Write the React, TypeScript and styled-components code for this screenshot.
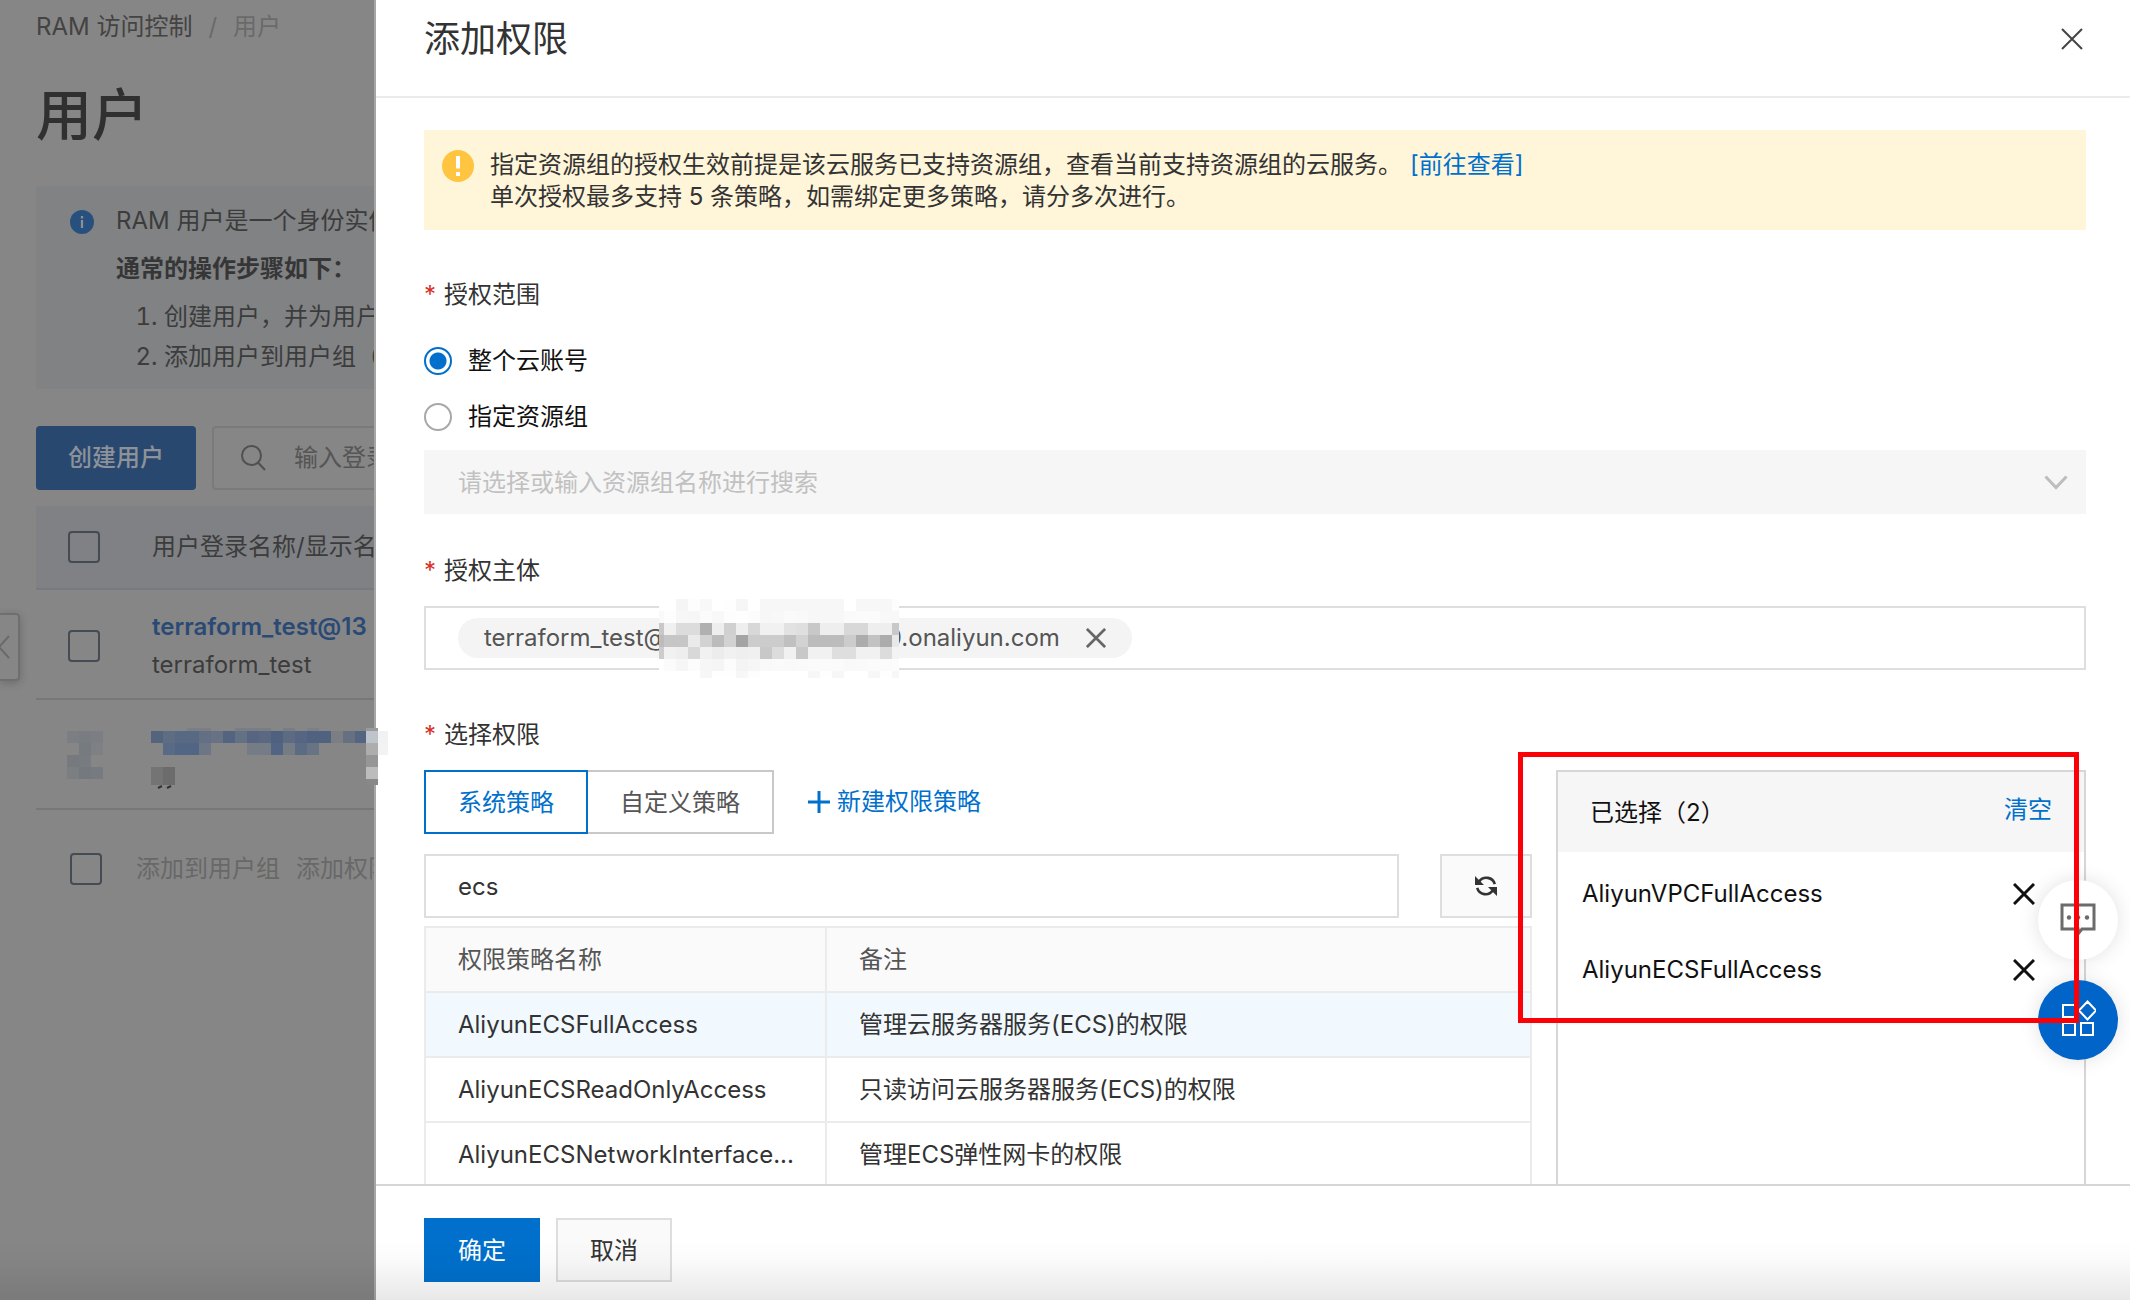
import React, { useState } from "react";
import styled, { createGlobalStyle, css } from "styled-components";

const GlobalStyle = createGlobalStyle`
  *, *::before, *::after { box-sizing: border-box; }
  body {
    margin: 0;
    color: #333;
    background: #868686;
    font-family: Inter, "Noto Sans CJK SC", sans-serif;
    font-size: 24px;
    line-height: 32px;
  }
  button, input, select { font: inherit; color: inherit; margin: 0; }
  button { cursor: pointer; }
  a { color: #0070cc; text-decoration: none; }
  svg { display: block; }
`;

/* ---------- page behind the drawer ---------- */

const Shell = styled.div`
  position: relative;
  display: flex;
  height: 100vh;
  overflow: hidden;
`;

const Backdrop = styled.aside`
  flex: 0 0 374px;
  width: 374px;
  padding: 11px 0 0 36px;
  background: #868686;
  color: #3c3c3c;
  white-space: nowrap;
`;

const Breadcrumb = styled.nav`
  display: flex;
  gap: 16px;
  color: #6a6a6a;
`;

const CrumbLink = styled.a`
  color: #434343;
`;

const PageTitle = styled.h1`
  margin: 36px 0 35px;
  font-size: 56px;
  line-height: 72px;
  font-weight: 500;
  color: #303030;
`;

const InfoBox = styled.section`
  display: flex;
  gap: 22px;
  height: 203px;
  padding: 19px 0 0 34px;
  background: #808284;
  border-radius: 3px 0 0 3px;

  > svg { flex: none; margin-top: 5px; }
`;

const InfoText = styled.div`
  p { margin: 0 0 16px; }
  p + p { margin-bottom: 12px; }
  strong { font-weight: 600; color: #363636; }
`;

const Steps = styled.ol`
  margin: 0;
  padding-left: 48px;
  line-height: 40px;
`;

const Toolbar = styled.div`
  display: flex;
  gap: 16px;
  margin: 37px 0 16px;
`;

const CreateButton = styled.button`
  flex: none;
  width: 160px;
  height: 64px;
  border: 0;
  border-radius: 4px;
  background: #28486f;
  color: #8d9299;
  font-weight: 500;
`;

const UserSearch = styled.label`
  flex: none;
  display: flex;
  align-items: center;
  gap: 28px;
  width: 420px;
  height: 64px;
  padding-left: 27px;
  border: 2px solid #7a7a7a;
  border-radius: 4px;

  svg { flex: none; }

  input {
    flex: 1;
    min-width: 0;
    border: 0;
    padding: 0;
    background: transparent;
    &::placeholder { color: #555; opacity: 1; }
  }
`;

const UserTable = styled.table`
  width: 100%;
  table-layout: fixed;
  border-spacing: 0;
  text-align: left;

  th, td { padding: 0; font-weight: 400; border-bottom: 2px solid #777; }
  th { height: 84px; background: #7f8184; border-color: #777b80; }
  td { height: 110px; padding-top: 3px; line-height: 38px; }
  th:first-child, td:first-child { width: 116px; padding-left: 32px; }
`;

const UserName = styled.a`
  display: block;
  font-weight: 600;
  color: #2a4a75;
`;

const HiddenUser = styled.td`
  && { padding: 0; position: relative; }
  svg { position: absolute; z-index: 2; left: 31px; top: 28px; }
`;

const Checkbox = styled.input.attrs({ type: "checkbox" })`
  appearance: none;
  display: block;
  flex: none;
  width: 32px;
  height: 32px;
  border: 2px solid #454b53;
  border-radius: 4px;
`;

const BatchBar = styled.div`
  display: flex;
  align-items: center;
  gap: 34px;
  padding: 43px 0 0 34px;
`;

const BatchActions = styled.div`
  display: flex;
  gap: 16px;
  color: #686868;
`;

const PlainButton = styled.button`
  padding: 0;
  border: 0;
  background: none;
  display: flex;
  align-items: center;
`;

const CollapseHandle = styled.button`
  position: absolute;
  left: 0;
  top: 613px;
  width: 20px;
  height: 68px;
  padding: 0;
  border: 2px solid #6f6f6f;
  border-left: 0;
  border-radius: 0 4px 4px 0;
  background: #868686;
  box-shadow: 0 2px 8px rgba(0, 0, 0, 0.2);
`;

/* ---------- drawer ---------- */

const Drawer = styled.main`
  position: relative;
  z-index: 1;
  flex: 1;
  min-width: 0;
  display: flex;
  flex-direction: column;
  background: #fff;
  border-left: 2px solid #a6a6a6;
`;

const DrawerHeader = styled.header`
  display: flex;
  justify-content: space-between;
  flex: none;
  height: 98px;
  padding: 15px 47px 0 48px;
  border-bottom: 2px solid #ebebeb;

  h2 { margin: 0; font-size: 36px; line-height: 48px; font-weight: 400; }
  button { height: 48px; }
`;

const DrawerBody = styled.div`
  flex: 1;
  min-height: 0;
  display: flex;
  flex-direction: column;
  overflow: hidden;
  padding: 32px 44px 0 48px;
`;

const Alert = styled.div`
  display: flex;
  gap: 16px;
  flex: none;
  padding: 19px 18px 17px;
  background: #fff5d9;

  > svg { flex: none; margin-top: 1px; }
  p { margin: 0; }
  a { margin-left: 8px; }
`;

const FieldLabel = styled.div<{ $top: number; $bottom: number }>`
  flex: none;
  margin: ${(p) => p.$top}px 0 ${(p) => p.$bottom}px;

  &::before {
    content: "*";
    display: inline-block;
    width: 20px;
    color: #d93026;
  }
`;

const RadioGroup = styled.div`
  display: flex;
  flex-direction: column;
  gap: 24px;
  color: #111;
`;

const RadioOption = styled.label`
  display: flex;
  align-items: center;
  gap: 16px;

  input {
    appearance: none;
    width: 28px;
    height: 28px;
    margin: 0;
    border: 2px solid #a8a8a8;
    border-radius: 50%;
    background: #fff;
  }
  input:checked {
    border-color: #0070cc;
    background: radial-gradient(circle, #0070cc 8px, #fff 9px);
  }
`;

const SelectWrap = styled.div`
  display: grid;
  flex: none;
  align-items: center;
  margin-top: 17px;
  background: #f6f6f6;

  > * { grid-area: 1 / 1; }
  svg { justify-self: end; margin-right: 18px; pointer-events: none; }

  select {
    appearance: none;
    width: 100%;
    height: 64px;
    padding: 2px 34px 0;
    border: 0;
    border-radius: 0;
    background: transparent;
    color: #c1c1c1;
    opacity: 1;
  }
`;

const TagBox = styled.div`
  flex: none;
  display: flex;
  align-items: center;
  height: 64px;
  padding: 0 32px;
  border: 2px solid #dedede;
`;

const Tag = styled.span`
  display: flex;
  align-items: center;
  height: 40px;
  padding: 0 26px;
  border-radius: 20px;
  background: #f4f4f4;
  color: #555;

  button { margin-left: 26px; }
`;

const Redacted = styled.svg`
  position: relative;
  flex: none;
  margin: -20px -12px -20px -8px;
`;

const PermissionArea = styled.div`
  flex: 1;
  min-height: 0;
  display: grid;
  grid-template-columns: minmax(0, 1fr) 530px;
  gap: 24px;
`;

const PolicyColumn = styled.div`
  min-width: 0;
`;

const TabBar = styled.div`
  display: flex;
  align-items: center;
`;

const Tab = styled.button<{ $active?: boolean }>`
  height: 64px;
  padding: 2px 32px 0;
  border: 2px solid #c8c8c8;
  background: #fff;
  color: #555;
  border-left-width: 0;
  ${(p) =>
    p.$active &&
    css`
      border: 2px solid #0070cc;
      color: #0070cc;
    `}
`;

const CreateLink = styled.a`
  display: flex;
  align-items: center;
  gap: 7px;
  margin-left: 34px;
`;

const SearchRow = styled.div`
  display: flex;
  gap: 41px;
  margin: 20px 0 8px;

  input {
    flex: 1;
    min-width: 0;
    height: 64px;
    padding: 0 32px;
    border: 2px solid #dedede;
    border-radius: 0;
    outline: 0;
  }
`;

const RefreshButton = styled.button`
  display: grid;
  place-items: center;
  width: 92px;
  height: 64px;
  padding: 0;
  border: 2px solid #dedede;
  background: #fafafa;
`;

const PolicyTable = styled.table`
  width: 100%;
  table-layout: fixed;
  border-spacing: 0;
  border: 2px solid #ebebeb;
  border-bottom: 0;
  border-right: 0;
  text-align: left;

  th, td {
    height: 65px;
    padding: 0 32px;
    font-weight: 400;
    white-space: nowrap;
    border-right: 2px solid #ebebeb;
    border-bottom: 2px solid #ebebeb;
  }
  th { background: #fafafa; color: #555; }
  th:first-child { width: 401px; }
`;

const PolicyRow = styled.tr<{ $selected: boolean }>`
  background: ${(p) => (p.$selected ? "#f1f9ff" : "#fff")};
`;

const SelectedPanel = styled.section`
  position: relative;
  border: 2px solid #d6d6d6;
  border-bottom: 0;
  color: #111;
`;

const SelectedHeader = styled.div`
  display: flex;
  justify-content: space-between;
  align-items: center;
  height: 80px;
  padding: 2px 32px 0;
  background: #f6f6f6;

  button { color: #0070cc; margin-bottom: 6px; }
`;

const SelectedList = styled.ul`
  list-style: none;
  margin: 0;
  padding: 4px 49px 0 24px;

  li {
    display: flex;
    justify-content: space-between;
    align-items: center;
    height: 76px;
  }
`;

const Highlight = styled.div`
  position: absolute;
  z-index: 3;
  inset: -20px 5px auto -40px;
  height: 271px;
  border: 5px solid #fb0007;
  pointer-events: none;
`;

const DrawerFooter = styled.footer`
  flex: none;
  display: flex;
  gap: 16px;
  height: 116px;
  padding: 32px 48px 0;
  border-top: 2px solid #d6d6d6;
`;

const ActionButton = styled.button<{ $primary?: boolean }>`
  width: 116px;
  height: 64px;
  padding: 2px 0 0;
  border: 2px solid ${(p) => (p.$primary ? "#0070cc" : "#dedede")};
  background: ${(p) => (p.$primary ? "#0070cc" : "#fafafa")};
  color: ${(p) => (p.$primary ? "#fff" : "#333")};
`;

const FloatingTools = styled.div`
  position: absolute;
  z-index: 2;
  right: 12px;
  bottom: 240px;
  display: grid;
  gap: 20px;
`;

const RoundButton = styled.button<{ $bg: string }>`
  display: grid;
  place-items: center;
  width: 80px;
  height: 80px;
  padding: 0;
  border: 0;
  border-radius: 50%;
  background: ${(p) => p.$bg};
  box-shadow: 0 0 20px rgba(0, 0, 0, 0.12);
`;

const BottomShade = styled.div`
  position: absolute;
  z-index: 4;
  inset: auto 0 0;
  height: 60px;
  background: linear-gradient(transparent, rgba(0, 0, 0, 0.02) 35%, rgba(0, 0, 0, 0.09));
  pointer-events: none;
`;

/* ---------- icons ---------- */

const CrossIcon = ({ size = 22, color = "#111", weight = 3 }) => (
  <svg width={size} height={size} viewBox="0 0 22 22" fill="none" stroke={color} strokeWidth={weight} aria-hidden="true">
    <path d="M1 1l20 20M21 1L1 21" />
  </svg>
);

const InfoIcon = () => (
  <svg width="24" height="24" viewBox="0 0 24 24" aria-hidden="true">
    <circle cx="12" cy="12" r="12" fill="#28507f" />
    <path d="M12 10v8M12 6v2.4" stroke="#8b9197" strokeWidth="2.2" />
  </svg>
);

const WarningIcon = () => (
  <svg width="32" height="32" viewBox="0 0 32 32" aria-hidden="true">
    <circle cx="16" cy="16" r="16" fill="#ffc440" />
    <path d="M16 6v12.5M16 22v4" stroke="#fff" strokeWidth="4" />
  </svg>
);

const SearchIcon = () => (
  <svg width="25" height="26" viewBox="0 0 25 26" fill="none" stroke="#505050" strokeWidth="2" aria-hidden="true">
    <circle cx="10.5" cy="10.5" r="9.5" />
    <path d="M17 17.5l7 7.5" />
  </svg>
);

const ChevronDown = () => (
  <svg width="24" height="15" viewBox="0 0 24 15" fill="none" stroke="#bdbdbd" strokeWidth="3" aria-hidden="true">
    <path d="M1.5 1.5L12 12.5 22.5 1.5" />
  </svg>
);

const PlusIcon = () => (
  <svg width="22" height="22" viewBox="0 0 22 22" stroke="#0070cc" strokeWidth="3" aria-hidden="true">
    <path d="M11 0v22M0 11h22" />
  </svg>
);

const RefreshIcon = () => (
  <svg width="22" height="22" viewBox="0 0 22 22" aria-hidden="true">
    <path d="M4.2 6.4A8.8 8.8 0 0 1 19.8 9.2M17.8 15.6A8.8 8.8 0 0 1 2.2 12.8" fill="none" stroke="#333" strokeWidth="2.6" />
    <path d="M0 1v9h9zM22 21v-9h-9z" fill="#333" />
  </svg>
);

const ChatIcon = () => (
  <svg width="36" height="36" viewBox="0 0 36 36" aria-hidden="true">
    <path d="M2 3h32v24H22l-4 5v-5H2z" fill="none" stroke="#6b6b6b" strokeWidth="3" />
    <circle cx="9" cy="15.500" r="2.200" fill="#6b6b6b" />
    <circle cx="18" cy="15.500" r="2.200" fill="#6b6b6b" />
    <circle cx="27" cy="15.500" r="2.200" fill="#6b6b6b" />
  </svg>
);

const AppsIcon = () => (
  <svg width="36" height="40" viewBox="0 0 36 40" fill="none" stroke="#fff" strokeWidth="2" aria-hidden="true">
    <path d="M3 5h12v12H3zM3 23h12v12H3zM21 23h12v12H21zM27.500 1.500L36 10.500 27.500 19.500 19 10.500z" />
  </svg>
);

/* ---------- blurred-out account ids ---------- */

const ACCOUNT_BLOCKS = [
  "ff ff f5 fd f8 ff fe f6 ff f7 f7 f7 f7 f7 f7 f7 ff f7 f7 f7 fd",
  "f9 fd f7 f6 fb f8 fd fe fc f7 f8 fa f9 f7 f7 f7 fa fb fb f8 f8",
  "c8 f0 dc dc b0 ee d0 ee d8 f1 f1 e2 df c8 ee ee d8 d8 ee ee c8",
  "bc c6 c6 ea d2 bc d2 a4 cc cc cc c0 d2 bc bc bc cc ac c2 ac e8",
  "cc f1 ee d8 f1 ec f1 ef f0 c8 dc f1 c8 f1 f1 de de f1 f1 dc f3",
  "ff fb f6 fc f6 f5 fc f4 f6 f9 fa f9 fa fb fb fb f9 fa fb fb fc",
  "ff ff ff ff f7 fe fe f7 fd ff ff ff ff f7 fe f7 ff ff f7 fe f7",
].map((row) => row.split(" "));

const AccountMosaic = () => (
  <Redacted width="240" height="79" viewBox="0 0 240 79" shapeRendering="crispEdges" aria-hidden="true">
    {ACCOUNT_BLOCKS.map((row, y) =>
      row.map((shade, x) => (
        <rect
          key={`${x}-${y}`}
          x={x ? x * 12 - 7 : 0}
          y={y * 12}
          width={x ? 12 : 5}
          height="12"
          fill={`#${shade}${shade}${shade}`}
        />
      ))
    )}
  </Redacted>
);

type Block = [x: number, y: number, w: number, h: number, fill: string];

const USER_BLOCKS: Block[] = [
  [0, 3, 12, 12, "#7b7f83"], [12, 3, 12, 12, "#797d82"], [24, 3, 12, 12, "#7b7e83"],
  [12, 15, 12, 12, "#767b80"], [24, 15, 12, 12, "#7e8084"],
  [0, 27, 12, 12, "#767a7e"], [12, 27, 12, 12, "#787c80"],
  [0, 39, 12, 12, "#7c7f82"], [12, 39, 12, 12, "#74797f"], [24, 39, 12, 12, "#767b81"],
  [120, 0, 24, 3, "#7b7e84"], [168, 0, 36, 3, "#797d84"], [216, 0, 12, 3, "#7a7d84"], [240, 0, 12, 3, "#7c7f84"],
  [84, 3, 12, 12, "#53647f"], [96, 3, 12, 12, "#5f6d82"], [108, 3, 24, 12, "#586983"], [132, 3, 12, 12, "#637083"],
  [144, 3, 12, 12, "#677284"], [156, 3, 12, 12, "#546480"], [168, 3, 12, 12, "#647083"], [180, 3, 12, 12, "#566682"],
  [192, 3, 12, 12, "#5a6882"], [204, 3, 12, 12, "#4e617f"], [216, 3, 12, 12, "#5c6a82"], [228, 3, 12, 12, "#566682"],
  [240, 3, 24, 12, "#506280"], [264, 3, 12, 12, "#7b7e82"], [276, 3, 12, 12, "#657080"], [288, 3, 12, 12, "#546582"],
  [96, 15, 12, 12, "#586a86"], [108, 15, 24, 12, "#526585"], [132, 15, 12, 12, "#6c7684"],
  [180, 15, 24, 12, "#767c85"], [204, 15, 12, 12, "#516483"], [216, 15, 12, 12, "#767c84"],
  [228, 15, 12, 12, "#5c6b84"], [240, 15, 12, 12, "#687384"],
  [84, 39, 12, 18, "#747474"], [96, 39, 12, 18, "#6c6c6c"],
  [299, 0, 12, 3, "#9a9b9d"], [299, 3, 12, 12, "#bec3cc"], [311, 3, 10, 12, "#f0f2f4"],
  [299, 15, 12, 12, "#adadad"], [311, 15, 10, 12, "#f3f3f4"], [299, 27, 12, 12, "#969696"],
  [299, 39, 12, 12, "#bcbcbc"], [299, 51, 12, 6, "#888888"],
];

const UserMosaic = () => (
  <svg width="321" height="62" viewBox="0 0 321 62" aria-hidden="true">
    <g shapeRendering="crispEdges">
      {USER_BLOCKS.map(([x, y, w, h, fill]) => (
        <rect key={`${x}-${y}`} x={x} y={y} width={w} height={h} fill={fill} />
      ))}
    </g>
    <path d="M91 60l4-2M100 60l4-2" stroke="#333" strokeWidth="2" />
  </svg>
);

/* ---------- data ---------- */

const POLICIES = [
  { name: "AliyunECSFullAccess", note: "管理云服务器服务(ECS)的权限" },
  { name: "AliyunECSReadOnlyAccess", note: "只读访问云服务器服务(ECS)的权限" },
  { name: "AliyunECSNetworkInterface...", note: "管理ECS弹性网卡的权限" },
];

const UserPage = () => (
  <Backdrop>
    <Breadcrumb>
      <CrumbLink href="#ram">RAM 访问控制</CrumbLink>
      <span>/</span>
      <span>用户</span>
    </Breadcrumb>
    <PageTitle>用户</PageTitle>
    <InfoBox>
      <InfoIcon />
      <InfoText>
        <p>RAM 用户是一个身份实体</p>
        <p><strong>通常的操作步骤如下：</strong></p>
        <Steps>
          <li>创建用户，并为用户</li>
          <li>添加用户到用户组（</li>
        </Steps>
      </InfoText>
    </InfoBox>
    <Toolbar>
      <CreateButton>创建用户</CreateButton>
      <UserSearch>
        <SearchIcon />
        <input aria-label="输入登录名" placeholder="输入登录名" />
      </UserSearch>
    </Toolbar>
    <UserTable>
      <thead>
        <tr>
          <th><Checkbox aria-label="全选" /></th>
          <th>用户登录名称/显示名</th>
        </tr>
      </thead>
      <tbody>
        <tr>
          <td><Checkbox aria-label="terraform_test" /></td>
          <td>
            <UserName href="#user">terraform_test@13</UserName>
            terraform_test
          </td>
        </tr>
        <tr>
          <HiddenUser colSpan={2}><UserMosaic /></HiddenUser>
        </tr>
      </tbody>
    </UserTable>
    <BatchBar>
      <Checkbox aria-label="选择全部用户" />
      <BatchActions>
        <PlainButton>添加到用户组</PlainButton>
        <PlainButton>添加权限</PlainButton>
      </BatchActions>
    </BatchBar>
    <CollapseHandle aria-label="收起">
      <svg width="12" height="26" viewBox="0 0 12 26" fill="none" stroke="#6a6a6a" strokeWidth="2">
        <path d="M9 2L-1 13 9 24" />
      </svg>
    </CollapseHandle>
  </Backdrop>
);

export default function App() {
  const [scope, setScope] = useState("account");
  const [keyword, setKeyword] = useState("ecs");
  const [selected, setSelected] = useState(["AliyunVPCFullAccess", "AliyunECSFullAccess"]);

  return (
    <Shell>
      <GlobalStyle />
      <UserPage />
      <Drawer>
        <DrawerHeader>
          <h2>添加权限</h2>
          <PlainButton aria-label="关闭"><CrossIcon color="#444" weight={2} /></PlainButton>
        </DrawerHeader>
        <DrawerBody>
          <Alert>
            <WarningIcon />
            <div>
              <p>
                指定资源组的授权生效前提是该云服务已支持资源组，查看当前支持资源组的云服务。
                <a href="#groups">[前往查看]</a>
              </p>
              <p>单次授权最多支持 5 条策略，如需绑定更多策略，请分多次进行。</p>
            </div>
          </Alert>

          <FieldLabel id="scope-label" $top={49} $bottom={34}>授权范围</FieldLabel>
          <RadioGroup role="radiogroup" aria-labelledby="scope-label">
            <RadioOption>
              <input type="radio" name="scope" checked={scope === "account"} onChange={() => setScope("account")} />
              整个云账号
            </RadioOption>
            <RadioOption>
              <input type="radio" name="scope" checked={scope === "group"} onChange={() => setScope("group")} />
              指定资源组
            </RadioOption>
          </RadioGroup>
          <SelectWrap>
            <select aria-label="资源组" disabled={scope !== "group"}>
              <option>请选择或输入资源组名称进行搜索</option>
            </select>
            <ChevronDown />
          </SelectWrap>

          <FieldLabel $top={41} $bottom={19}>授权主体</FieldLabel>
          <TagBox>
            <Tag>
              terraform_test@
              <AccountMosaic />
              0.onaliyun.com
              <PlainButton aria-label="移除"><CrossIcon size={20} color="#666" /></PlainButton>
            </Tag>
          </TagBox>

          <FieldLabel $top={49} $bottom={19}>选择权限</FieldLabel>
          <PermissionArea>
            <PolicyColumn>
              <TabBar>
                <Tab $active>系统策略</Tab>
                <Tab>自定义策略</Tab>
                <CreateLink href="#new-policy"><PlusIcon />新建权限策略</CreateLink>
              </TabBar>
              <SearchRow>
                <input aria-label="搜索策略" value={keyword} onChange={(e) => setKeyword(e.target.value)} />
                <RefreshButton aria-label="刷新"><RefreshIcon /></RefreshButton>
              </SearchRow>
              <PolicyTable>
                <thead>
                  <tr><th>权限策略名称</th><th>备注</th></tr>
                </thead>
                <tbody>
                  {POLICIES.map((p) => (
                    <PolicyRow key={p.name} $selected={selected.includes(p.name)}>
                      <td>{p.name}</td>
                      <td>{p.note}</td>
                    </PolicyRow>
                  ))}
                </tbody>
              </PolicyTable>
            </PolicyColumn>
            <SelectedPanel>
              <SelectedHeader>
                <span>已选择（{selected.length}）</span>
                <PlainButton onClick={() => setSelected([])}>清空</PlainButton>
              </SelectedHeader>
              <SelectedList>
                {selected.map((name) => (
                  <li key={name}>
                    {name}
                    <PlainButton
                      aria-label={`移除 ${name}`}
                      onClick={() => setSelected(selected.filter((n) => n !== name))}
                    >
                      <CrossIcon />
                    </PlainButton>
                  </li>
                ))}
              </SelectedList>
              <Highlight />
            </SelectedPanel>
          </PermissionArea>
        </DrawerBody>
        <DrawerFooter>
          <ActionButton $primary>确定</ActionButton>
          <ActionButton>取消</ActionButton>
        </DrawerFooter>
        <FloatingTools>
          <RoundButton $bg="#fff" aria-label="在线咨询"><ChatIcon /></RoundButton>
          <RoundButton $bg="#0064c8" aria-label="应用"><AppsIcon /></RoundButton>
        </FloatingTools>
      </Drawer>
      <BottomShade />
    </Shell>
  );
}
